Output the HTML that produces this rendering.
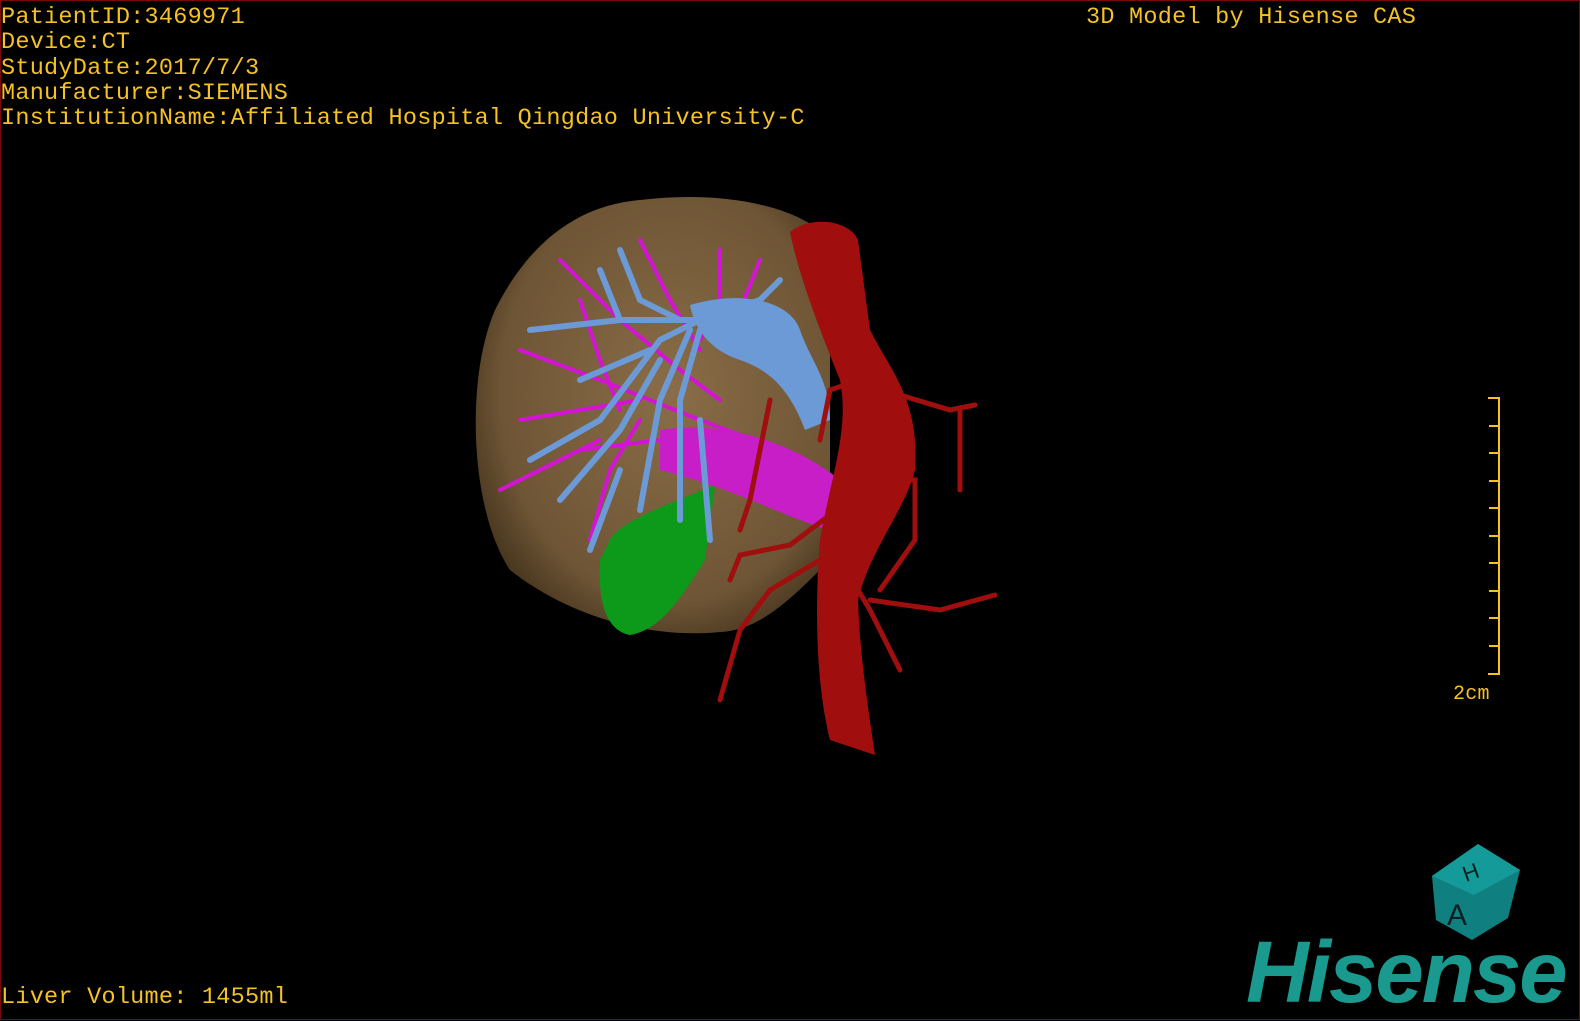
<!DOCTYPE html>
<html><head><meta charset="utf-8"><style>
body{margin:0;background:#000;width:1580px;height:1020px;overflow:hidden;position:relative}
.f{position:absolute;left:0;top:0;width:1580px;height:1020px;border:1px solid #7a0a0a;box-sizing:border-box}
.t{position:absolute;color:#f5c125;font-family:"Liberation Mono",monospace;font-size:23.5px;line-height:25.3px;letter-spacing:0.25px;white-space:pre}
.hs{position:absolute;left:1246px;top:930px;color:#1a9a8e;font-family:"Liberation Sans",sans-serif;font-weight:bold;font-style:italic;font-size:87px;letter-spacing:-2px;line-height:86px;white-space:nowrap}
.sb{position:absolute;background:#f5c125}
</style></head><body>
<div class="f"></div>
<div class="t" style="left:1px;top:5px">PatientID:3469971
Device:CT
StudyDate:2017/7/3
Manufacturer:SIEMENS
InstitutionName:Affiliated Hospital Qingdao University-C</div>
<div class="t" style="left:1086px;top:5px">3D Model by Hisense CAS</div>
<div class="t" style="left:1px;top:985px">Liver Volume: 1455ml</div>
<div class="t" style="left:1453px;top:682px;font-size:20px">2cm</div>
<div class="sb" style="left:1498px;top:397px;width:2px;height:278px"></div>
<div class="sb" style="left:1488px;top:397px;width:12px;height:2px"></div>
<div class="sb" style="left:1488px;top:673px;width:12px;height:2px"></div>
<div class="sb" style="left:1489px;top:425px;width:10px;height:2px"></div>
<div class="sb" style="left:1489px;top:452px;width:10px;height:2px"></div>
<div class="sb" style="left:1489px;top:480px;width:10px;height:2px"></div>
<div class="sb" style="left:1489px;top:507px;width:10px;height:2px"></div>
<div class="sb" style="left:1489px;top:535px;width:10px;height:2px"></div>
<div class="sb" style="left:1489px;top:562px;width:10px;height:2px"></div>
<div class="sb" style="left:1489px;top:590px;width:10px;height:2px"></div>
<div class="sb" style="left:1489px;top:617px;width:10px;height:2px"></div>
<div class="sb" style="left:1489px;top:645px;width:10px;height:2px"></div>
<svg width="1580" height="1020" style="position:absolute;left:0;top:0">
<defs><radialGradient id="lg" cx="0.55" cy="0.45" r="0.6"><stop offset="0" stop-color="#8a6d48"/><stop offset="0.8" stop-color="#6e5535"/><stop offset="1" stop-color="#4a3820"/></radialGradient></defs>
<path d="M640 200 C720 190 800 205 830 240 L830 560 C790 600 760 630 720 632 C640 640 560 610 510 570 C470 510 465 380 495 310 C530 240 580 205 640 200Z" fill="url(#lg)"/>
<path d="M610 540 C620 520 680 500 715 485 L705 560 C680 600 660 630 630 635 C605 630 598 600 600 560Z" fill="#0d9a1a"/>
<g fill="none" stroke="#d414d4" stroke-width="4" stroke-linecap="round">
<path d="M520 350 L600 380 L700 420 L780 450 L820 480"/><path d="M500 490 L580 450 L660 440"/><path d="M560 260 L620 320 L680 370 L720 400"/><path d="M640 240 L670 300 L700 350"/><path d="M720 250 L720 300 L700 340"/><path d="M590 540 L610 470 L640 420"/><path d="M520 420 L580 410 L640 400"/><path d="M580 300 L600 360 L620 410"/><path d="M760 260 L740 310"/><path d="M540 470 L600 440"/>
</g>
<path d="M660 430 C720 420 790 440 840 480 L830 530 C790 520 740 490 660 470Z" fill="#c81ec8"/>
<g fill="none" stroke="#6b9ad6" stroke-width="6" stroke-linecap="round">
<path d="M530 330 L620 320 L700 320"/><path d="M600 420 L660 340 L700 320"/><path d="M640 510 L660 400 L690 330"/><path d="M680 520 L680 400 L700 330"/><path d="M710 540 L700 420"/><path d="M560 500 L620 430 L660 360"/><path d="M620 250 L640 300 L680 320"/><path d="M600 270 L620 320"/><path d="M700 320 L760 300 L780 280"/><path d="M530 460 L600 420"/><path d="M580 380 L650 350"/><path d="M590 550 L620 470"/>
</g>
<path d="M690 305 C740 290 790 300 800 330 C810 360 830 380 830 420 L805 430 C790 390 770 370 740 360 C710 350 695 330 690 305Z" fill="#6b9ad6"/>
<path d="M790 232 C810 215 850 220 858 240 L870 330 C890 370 920 400 915 470 C905 510 870 550 858 600 C860 660 870 720 875 755 L830 740 C815 680 815 600 820 540 C830 480 850 430 840 380 C820 330 800 280 790 232Z" fill="#a00e0e"/>
<g fill="none" stroke="#a00e0e" stroke-width="5" stroke-linecap="round">
<path d="M860 390 L900 395 L950 410 L975 405"/><path d="M960 410 L960 490"/><path d="M860 380 L830 390 L820 440"/><path d="M850 500 L790 545 L740 555 L730 580"/><path d="M820 560 L770 590 L740 630 L720 700"/><path d="M880 480 L915 480 L915 540 L880 590"/><path d="M840 560 L870 610 L900 670"/><path d="M870 600 L940 610 L995 595"/><path d="M770 400 L750 500 L740 530"/>
</g>
<polygon points="1432,876 1478,844 1520,870 1508,918 1472,940 1436,920" fill="#0f7f80"/>
<polygon points="1432,876 1478,844 1520,870 1474,895" fill="#159a9a"/>
<text x="1447" y="925" font-family="Liberation Sans" font-size="30" fill="#062020">A</text>
<text x="1462" y="880" font-family="Liberation Sans" font-size="22" fill="#062020" transform="rotate(-20 1470 870)">H</text>
</svg>
<div class="hs">Hisense</div>
</body></html>
